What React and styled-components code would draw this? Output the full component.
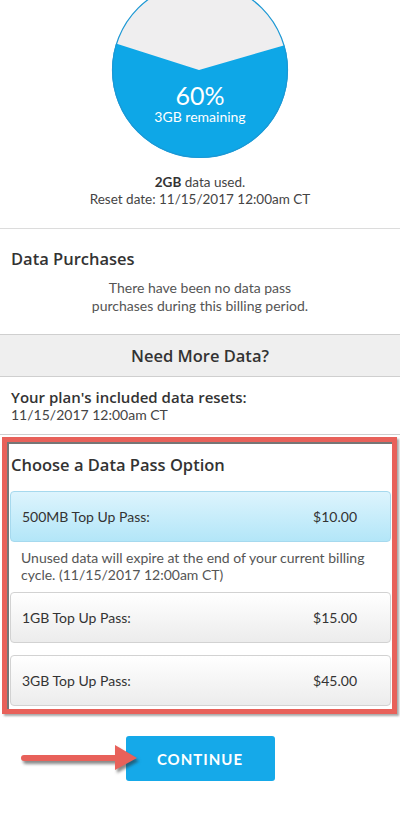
import React from "react";
import styled, { createGlobalStyle } from "styled-components";

const Global = createGlobalStyle`
  html, body { margin: 0; padding: 0; background: #fff; }
  body { font-family: Lato, "Open Sans", sans-serif; color: #333; width: 400px; overflow: hidden; }
  * { box-sizing: border-box; }
`;

const Page = styled.div`
  width: 400px;
  height: 832px;
  display: flex;
  flex-direction: column;
  overflow: hidden;
`;

const Summary = styled.section`
  display: flex;
  flex-direction: column;
  align-items: center;
  padding-bottom: 20px;
  border-bottom: 1px solid #dcdcdc;
`;

const Chart = styled.svg`
  display: block;
  margin-top: -19px;
`;

const UsageText = styled.div`
  margin-top: 15px;
  font-size: 13.5px;
  line-height: 17px;
  text-align: center;
  color: #444;
  b { font-weight: 700; color: #333; }
`;

const Purchases = styled.section`
  padding: 20px 0 19px;
  border-bottom: 1px solid #cfcfcf;
`;

const Title = styled.h2`
  margin: 0;
  padding-left: 11px;
  font-family: "Open Sans", Lato, sans-serif;
  font-size: 16.5px;
  line-height: 20px;
  font-weight: 600;
  color: #333;
`;

const CenterNote = styled.p`
  margin: 10px 0 0;
  font-size: 14px;
  line-height: 18px;
  text-align: center;
  color: #555;
`;

const Banner = styled.div`
  height: 42px;
  display: flex;
  align-items: center;
  justify-content: center;
  background: #efefef;
  border-bottom: 1px solid #cfcfcf;
  font-family: "Open Sans", Lato, sans-serif;
  font-size: 16.5px;
  font-weight: 600;
  color: #333;
`;

const ResetInfo = styled.section`
  padding: 11px 11px 11px;
  border-bottom: 1px solid #cfcfcf;
`;

const ResetLabel = styled.div`
  font-family: "Open Sans", Lato, sans-serif;
  font-size: 15px;
  line-height: 18px;
  font-weight: 600;
  color: #333;
`;

const ResetDate = styled.div`
  font-size: 14px;
  line-height: 17px;
  color: #444;
`;

const PassSection = styled.section`
  position: relative;
  padding: 20px 9px 8px 10px;
  display: flex;
  flex-direction: column;
`;

const PassTitle = styled(Title)`
  padding-left: 1px;
  margin-bottom: 16px;
`;

const Option = styled.div`
  height: 51px;
  display: flex;
  align-items: center;
  justify-content: space-between;
  padding: 0 33px 0 11px;
  border: 1px solid ${(p) => (p.$selected ? "#a6d9ee" : "#d2d2d2")};
  border-radius: 4px;
  background: ${(p) =>
    p.$selected
      ? "linear-gradient(#ddf4fd, #b3e6f8)"
      : "linear-gradient(#ffffff, #ececec)"};
  font-size: 14px;
  color: #333;
  margin-top: ${(p) => p.$gap || 0}px;
`;

const OptionNote = styled.p`
  margin: 7px 0 0 11px;
  font-size: 14px;
  line-height: 17px;
  color: #555;
`;

const RedFrame = styled.div`
  position: absolute;
  top: 2px;
  left: 2px;
  right: 3px;
  bottom: 0;
  border: 5px solid #e8615a;
  box-shadow: inset 2px 2px 0 rgba(60, 60, 60, 0.7), 2px 2px 2px rgba(60, 60, 60, 0.45);
  pointer-events: none;
`;

const ActionRow = styled.div`
  position: relative;
  display: flex;
  justify-content: center;
  margin-top: 22px;
`;

const ContinueButton = styled.button`
  width: 149px;
  height: 45px;
  border: none;
  border-radius: 3px;
  background: #15a9e9;
  color: #fff;
  font-family: Lato, "Open Sans", sans-serif;
  font-size: 15px;
  font-weight: 700;
  letter-spacing: 1px;
  cursor: pointer;
`;

const Arrow = styled.svg`
  position: absolute;
  left: 18px;
  top: 6px;
  overflow: visible;
`;

function UsageChart() {
  return (
    <Chart width="178" height="178" viewBox="0 0 178 178">
      <defs>
        <clipPath id="circ">
          <circle cx="89" cy="89" r="88" />
        </clipPath>
      </defs>
      <circle cx="89" cy="89" r="88" fill="#efeeef" />
      <path d="M0 61 L88 89 L178 63 L178 178 L0 178 Z" fill="#0ea7e7" clipPath="url(#circ)" />
      <circle cx="89" cy="89" r="87.5" fill="none" stroke="#1b98d5" strokeWidth="1.2" />
      <text x="89" y="124" textAnchor="middle" fill="#fff" fontFamily="Lato, sans-serif" fontSize="25">60%</text>
      <text x="89" y="141" textAnchor="middle" fill="#fff" fontFamily="Lato, sans-serif" fontSize="14">3GB remaining</text>
    </Chart>
  );
}

export default function App() {
  return (
    <Page>
      <Global />
      <Summary>
        <UsageChart />
        <UsageText>
          <div><b>2GB</b> data used.</div>
          <div>Reset date: 11/15/2017 12:00am CT</div>
        </UsageText>
      </Summary>
      <Purchases>
        <Title>Data Purchases</Title>
        <CenterNote>
          There have been no data pass
          <br />
          purchases during this billing period.
        </CenterNote>
      </Purchases>
      <Banner>Need More Data?</Banner>
      <ResetInfo>
        <ResetLabel>Your plan's included data resets:</ResetLabel>
        <ResetDate>11/15/2017 12:00am CT</ResetDate>
      </ResetInfo>
      <PassSection>
        <PassTitle>Choose a Data Pass Option</PassTitle>
        <Option $selected>
          <span>500MB Top Up Pass:</span>
          <span>$10.00</span>
        </Option>
        <OptionNote>
          Unused data will expire at the end of your current billing cycle. (11/15/2017 12:00am CT)
        </OptionNote>
        <Option $gap={9}>
          <span>1GB Top Up Pass:</span>
          <span>$15.00</span>
        </Option>
        <Option $gap={12}>
          <span>3GB Top Up Pass:</span>
          <span>$45.00</span>
        </Option>
        <RedFrame />
      </PassSection>
      <ActionRow>
        <ContinueButton>CONTINUE</ContinueButton>
        <Arrow width="122" height="30" viewBox="0 0 122 30">
          <g fill="#e8615a" style={{ filter: "drop-shadow(2px 3px 1.5px rgba(40,40,40,0.55))" }}>
            <path d="M6 13 L100 13 L100 19 L6 19 A3 3 0 0 1 6 13 Z" />
            <path d="M97 3 L119 16 L97 28 Z" />
          </g>
        </Arrow>
      </ActionRow>
    </Page>
  );
}
